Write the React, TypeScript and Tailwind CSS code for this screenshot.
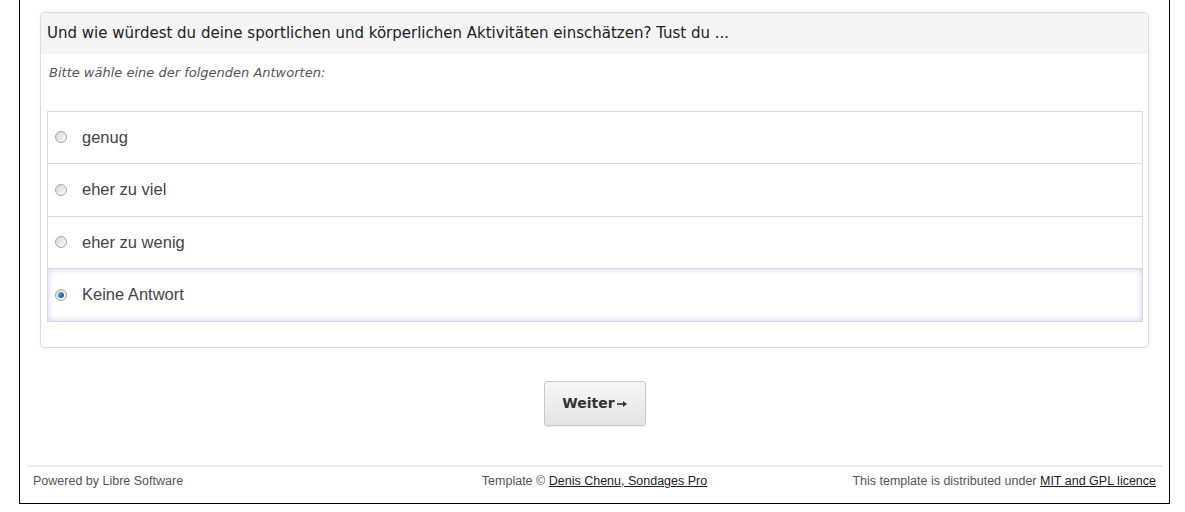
const answers = [
  { id: 'A1', label: 'genug' },
  { id: 'A2', label: 'eher zu viel' },
  { id: 'A3', label: 'eher zu wenig' },
  { id: '', label: 'Keine Antwort' },
];

function Radio({ checked }: { checked: boolean }) {
  return (
    <span className="flex h-[12px] w-[12px] shrink-0 items-center justify-center rounded-full border border-[#a7a7a7] bg-gradient-to-br from-[#d6d6d6] to-[#fbfbfb]">
      {checked && (
        <span className="h-[6px] w-[6px] rounded-full bg-gradient-to-br from-[#5fb3ea] to-[#0b4f86]" />
      )}
    </span>
  );
}

export default function App() {
  const selected = '';

  return (
    <div className="h-[512px] bg-white font-['Liberation_Sans',Arial,sans-serif] text-[#333]">
      <div className="ml-[19px] w-[1151px] border-x border-b border-black px-[20px] pt-[12px]">
        {/* Question card */}
        <div className="rounded-[5px] border border-[#dcdcdc] bg-white pb-[25px] shadow-[0_0_6px_rgba(0,0,0,0.06)]">
          <div className="flex h-[41px] items-center rounded-t-[5px] bg-[#f5f5f5] px-[6px] font-['DejaVu_Sans',Verdana,sans-serif] text-[15px] text-[#222]">
            Und wie würdest du deine sportlichen und körperlichen Aktivitäten einschätzen? Tust du ...
          </div>
          <p className="px-[8px] pb-[28px] pt-[9px] font-['DejaVu_Sans',Verdana,sans-serif] text-[13px] italic text-[#555]">
            Bitte wähle eine der folgenden Antworten:
          </p>
          <ul className="mx-[6px] mr-[5px] border border-b-0 border-[#dadada]">
            {answers.map((a) => {
              const checked = a.id === selected;
              return (
                <li
                  key={a.label}
                  className={
                    checked
                      ? 'flex h-[52.5px] items-center gap-[15px] border-b border-[#d8d8e2] pl-[7px] text-[16.5px] text-[#444] shadow-[inset_0_0_6px_rgba(150,140,210,0.45)]'
                      : 'flex h-[52.5px] items-center gap-[15px] border-b border-[#dadada] pl-[7px] text-[16.5px] text-[#444]'
                  }
                >
                  <Radio checked={checked} />
                  <span>{a.label}</span>
                </li>
              );
            })}
          </ul>
        </div>

        {/* Navigation */}
        <div className="flex justify-center pt-[33px]">
          <button
            type="button"
            className="flex h-[45px] w-[102px] items-center justify-center gap-[2px] rounded-[3px] border border-[#c8c8c8] bg-gradient-to-b from-[#f7f7f7] to-[#e4e4e4] font-['DejaVu_Sans',Verdana,sans-serif] text-[14px] font-bold text-[#333] shadow-[0_1px_1px_rgba(0,0,0,0.08)]"
          >
            Weiter
            <svg width="10" height="8" viewBox="0 0 10 8" className="mt-[1px]">
              <path d="M0 4h7" stroke="#333" strokeWidth="1.6" />
              <path d="M6 1l4 3-4 3z" fill="#333" />
            </svg>
          </button>
        </div>

        {/* Footer */}
        <div className="mx-[-13px] mt-[39px] border-t-2 border-[#ececec] px-[6px] pb-[13px] pt-[5px]">
          <div className="flex items-center text-[12.5px] text-[#555]">
            <span className="flex-1">Powered by Libre Software</span>
            <span>
              Template © <a className="text-[#222] underline">Denis Chenu, Sondages Pro</a>
            </span>
            <span className="flex-1 text-right">
              This template is distributed under <a className="text-[#222] underline">MIT and GPL licence</a>
            </span>
          </div>
        </div>
      </div>
    </div>
  );
}
